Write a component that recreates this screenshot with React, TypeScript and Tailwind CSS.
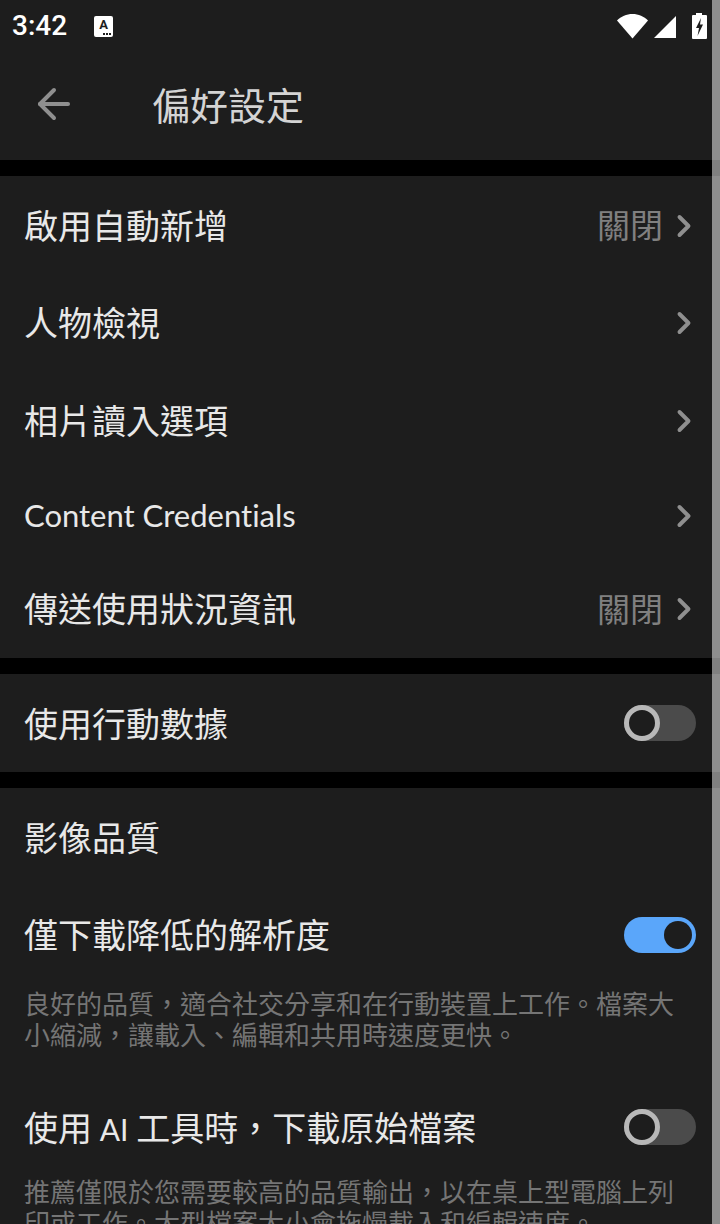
import { ArrowLeft, ChevronRight } from "lucide-react";

const font = "[font-family:'Lato','Noto_Sans_CJK_TC',sans-serif]";

function NavRow({ label, value, height, latin }: { label: string; value?: string; height: string; latin?: boolean }) {
  return (
    <div className={`flex items-center pl-6 pr-6 ${height}`}>
      <span className={`flex-1 leading-none text-[#e8e8e8] ${latin ? "text-[31px] [font-variant-ligatures:none]" : "text-[34px]"}`}>{label}</span>
      {value && <span className="text-[33px] leading-none text-[#808080]">{value}</span>}
      <div className="ml-[3px] -mr-[6px] h-[36px] w-[36px] shrink-0">
        <ChevronRight className="h-[36px] w-[36px] text-[#8f8f8f]" strokeWidth={2.6} />
      </div>
    </div>
  );
}

function Toggle({ on }: { on?: boolean }) {
  if (on) {
    return (
      <div className="flex h-[36px] w-[72px] shrink-0 items-center justify-end rounded-full bg-[#5aa6fa] pr-[4px]">
        <div className="h-[28px] w-[28px] rounded-full bg-[#1d1d1d]" />
      </div>
    );
  }
  return (
    <div className="flex h-[36px] w-[72px] shrink-0 items-center rounded-full bg-[#4b4b4b]">
      <div className="h-[36px] w-[36px] rounded-full border-[5px] border-[#b8b8b8] bg-[#1d1d1d]" />
    </div>
  );
}

export default function App() {
  return (
    <div className={`relative h-[1224px] w-[720px] overflow-hidden bg-black ${font}`}>
      {/* status bar + toolbar */}
      <div className="h-[160px] bg-[#1d1d1d]">
        <div className="flex h-[50px] items-center pl-3 pr-[13px] pt-[2px]">
          <span className="font-['Roboto'] text-[28px] font-medium leading-none text-white">3:42</span>
          <div className="relative ml-[27px] flex h-[21px] w-[19px] items-start justify-center rounded-[2px] bg-white">
            <span className="font-['Roboto'] text-[13px] font-bold leading-[17px] text-[#1d1d1d]">A</span>
            <div className="absolute bottom-[2px] right-[2px] flex gap-[1px]">
              <div className="h-[2px] w-[2px] bg-[#1d1d1d]" />
              <div className="h-[2px] w-[2px] bg-[#1d1d1d]" />
              <div className="h-[2px] w-[2px] bg-[#1d1d1d]" />
            </div>
          </div>
          <div className="flex-1" />
          <svg width="31" height="25" viewBox="0 0 31 25" className="mr-[6px]">
            <path d="M0 6.5C4 2.5 9.5 0 15.5 0S27 2.5 31 6.5L15.5 24.5Z" fill="#fff" />
          </svg>
          <svg width="22" height="22" viewBox="0 0 22 22" className="mr-[16px] mt-[2px]">
            <path d="M22 0V22H0Z" fill="#fff" />
          </svg>
          <svg width="15" height="26" viewBox="0 0 15 26">
            <path d="M4 0H10V2H14a1 1 0 0 1 1 1V25a1 1 0 0 1-1 1H1a1 1 0 0 1-1-1V3a1 1 0 0 1 1-1H4Z" fill="#fff" />
            <path d="M9 5 4 15H7L5.5 23 11 11.5H8Z" fill="#1d1d1d" />
          </svg>
        </div>
        <div className="flex h-[110px] items-center">
          <ArrowLeft className="ml-[30px] -mt-[2px] h-[48px] w-[48px] text-[#8f8f8f]" strokeWidth={2} />
          <span className="ml-[74px] text-[38px] leading-none text-[#d4d4d4]">偏好設定</span>
        </div>
      </div>

      <div className="mt-[16px] bg-[#1d1d1d]">
        <NavRow label="啟用自動新增" value="關閉" height="h-[99px]" />
        <NavRow label="人物檢視" height="h-[96px]" />
        <NavRow label="相片讀入選項" height="h-[100px]" />
        <NavRow label="Content Credentials" height="h-[89px]" latin />
        <NavRow label="傳送使用狀況資訊" value="關閉" height="h-[98px]" />
      </div>

      <div className="mt-[16px] flex h-[98px] items-center bg-[#1d1d1d] pl-6 pr-6">
        <span className="flex-1 pt-[2px] text-[34px] leading-none text-[#e8e8e8]">使用行動數據</span>
        <Toggle />
      </div>

      <div className="mt-[16px] h-[500px] bg-[#1d1d1d] px-6">
        <div className="flex h-[100px] items-center text-[34px] leading-none text-[#e8e8e8]">影像品質</div>
        <div className="flex h-[94px] items-center">
          <span className="flex-1 text-[34px] leading-none text-[#e8e8e8]">僅下載降低的解析度</span>
          <Toggle on />
        </div>
        <p className="mt-[7px] text-[26px] leading-[31px] text-[#757575]">
          良好的品質，適合社交分享和在行動裝置上工作。檔案大
          <br />
          小縮減，讓載入、編輯和共用時速度更快。
        </p>
        <div className="mt-[28px] flex h-[96px] items-center">
          <span className="flex-1 pt-[2px] text-[34px] leading-none text-[#e8e8e8] [word-spacing:-1px]">
            使用 <span className="text-[30px]">AI</span> 工具時，下載原始檔案
          </span>
          <Toggle />
        </div>
        <p className="mt-[2px] text-[26px] leading-[31px] text-[#757575]">
          推薦僅限於您需要較高的品質輸出，以在桌上型電腦上列
          <br />
          印或工作。大型檔案大小會拖慢載入和編輯速度。
        </p>
      </div>

      {/* scrollbar */}
      <div className="absolute inset-y-0 right-0 w-[8px] bg-white/50" />
    </div>
  );
}
